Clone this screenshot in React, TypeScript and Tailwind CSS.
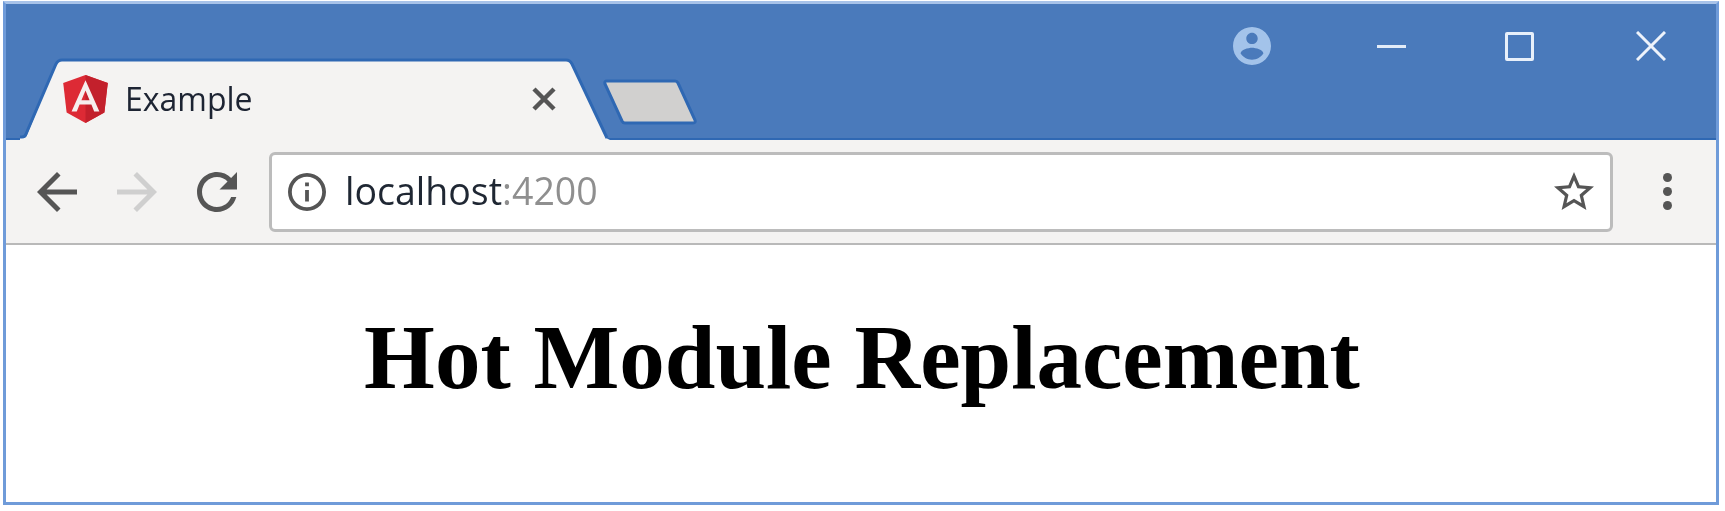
import React from 'react';

const AngularLogo = () => (
  <svg viewBox="31 30 188 200" className="h-[48px] w-[45px] shrink-0">
    <polygon fill="#dd2a35" points="125,30 31.9,63.2 46.1,186.3 125,230 203.9,186.3 218.1,63.2" />
    <polygon fill="#c3202c" points="125,30 125,230 203.9,186.3 218.1,63.2" />
    <path
      fill="#f6eeee"
      d="M125,52.1L66.8,182.6h21.7l11.7-29.2h49.4l11.7,29.2h21.7L125,52.1z M142,135.4H108l17-40.9L142,135.4z"
    />
  </svg>
);

const Tab = () => (
  <div className="relative -mb-[2px] flex h-[82px] w-[590px] shrink-0 items-center pl-[43px] pr-[54px]">
    <svg viewBox="0 0 590 82" className="absolute inset-0 h-full w-full">
      <path d="M0 80 H3 Q6 80 7 77 L36 6 Q38 2 42 2 H546 Q550 2 552 6 L586 80 L590 82 H0 Z" fill="#f4f3f2" />
      <path
        d="M0 79 H2 Q5 79 6 76 L36 6 Q38 2 42 2 H546 Q550 2 552 6 L587 80"
        fill="none"
        stroke="#2f68b3"
        strokeWidth="3"
      />
    </svg>
    <div className="relative flex w-full items-center">
      <AngularLogo />
      <span className="ml-[17px] text-[32px] leading-none text-[#1d2433]">Example</span>
      <svg viewBox="0 0 24 24" className="ml-auto h-[24px] w-[24px]">
        <path d="M2 2 L22 22 M22 2 L2 22" stroke="#555555" strokeWidth="4.5" />
      </svg>
    </div>
  </div>
);

const NewTab = () => (
  <svg viewBox="0 0 100 48" className="relative z-10 -ml-[10px] mb-[12px] h-[48px] w-[100px] shrink-0">
    <path
      d="M7 3 H75 Q77 3 78 5 L95 42 Q96 45 93 45 H25 Q23 45 22 43 L5 6 Q4 3 7 3 Z"
      fill="#d1d0cf"
      stroke="#2f68b3"
      strokeWidth="3"
    />
  </svg>
);

const WindowControls = () => (
  <div className="mt-[23px] flex h-[38px] items-center self-start pr-[50px]">
    <svg viewBox="2 2 20 20" className="h-[38px] w-[38px]">
      <path
        fill="#a3c3ea"
        d="M12 2C6.48 2 2 6.48 2 12s4.48 10 10 10 10-4.48 10-10S17.52 2 12 2zm0 3c1.66 0 3 1.34 3 3s-1.34 3-3 3-3-1.34-3-3 1.34-3 3-3zm0 14.2c-2.5 0-4.71-1.28-6-3.22.03-1.99 4-3.08 6-3.08 1.99 0 5.97 1.09 6 3.08-1.29 1.94-3.5 3.22-6 3.22z"
      />
    </svg>
    <div className="ml-[106px] h-[3px] w-[29px] bg-[#e3ecf8]" />
    <div className="ml-[99px] h-[29px] w-[29px] rounded-[2px] border-[3px] border-[#e8f0fa]" />
    <svg viewBox="0 0 30 30" className="ml-[102px] h-[30px] w-[30px]">
      <path d="M1 1 L29 29 M29 1 L1 29" stroke="#eef3fb" strokeWidth="3" />
    </svg>
  </div>
);

const Toolbar = () => (
  <div className="flex h-[105px] shrink-0 items-center border-b-2 border-[#b9b9b9] bg-[#f4f3f2] pl-[31px] pr-[44px]">
    <svg viewBox="4 4 16 16" className="h-[40px] w-[40px] shrink-0">
      <path fill="#555555" d="M20 11H7.83l5.59-5.59L12 4l-8 8 8 8 1.41-1.41L7.83 13H20v-2z" />
    </svg>
    <svg viewBox="4 4 16 16" className="ml-[40px] h-[40px] w-[40px] shrink-0">
      <path fill="#cfcfcf" d="M12 4l-1.41 1.41L16.17 11H4v2h12.17l-5.58 5.59L12 20l8-8z" />
    </svg>
    <svg viewBox="4 4 16 16" className="ml-[40px] h-[40px] w-[40px] shrink-0">
      <path
        fill="#555555"
        d="M17.65 6.35C16.2 4.9 14.21 4 12 4c-4.42 0-7.99 3.58-7.99 8s3.57 8 7.99 8c3.73 0 6.84-2.55 7.73-6h-2.08c-.82 2.33-3.04 4-5.65 4-3.31 0-6-2.69-6-6s2.69-6 6-6c1.66 0 3.14.69 4.22 1.78L13 11h7V4l-2.35 2.35z"
      />
    </svg>
    <div className="ml-[32px] flex h-[80px] flex-1 items-center rounded-[6px] border-[3px] border-[#bcbcbc] bg-white pl-[16px] pr-[16px]">
      <svg viewBox="2 2 20 20" className="h-[38px] w-[38px] shrink-0">
        <path
          fill="#555555"
          d="M11 17h2v-6h-2v6zm1-15C6.48 2 2 6.48 2 12s4.48 10 10 10 10-4.48 10-10S17.52 2 12 2zm0 18c-4.41 0-8-3.59-8-8s3.59-8 8-8 8 3.59 8 8-3.59 8-8 8zM11 9h2V7h-2v2z"
        />
      </svg>
      <span className="ml-[19px] -mt-[2px] text-[37.5px] leading-none text-[#1f2733]">
        localhost<span className="text-[#8f8f8f]">:4200</span>
      </span>
      <svg viewBox="2 2 20 20" className="ml-auto h-[40px] w-[40px] shrink-0">
        <path
          fill="#555555"
          d="M22 9.24l-7.19-.62L12 2 9.19 8.63 2 9.24l5.46 4.73L5.82 21 12 17.27 18.18 21l-1.63-7.03L22 9.24zM12 15.4l-3.76 2.27 1-4.28-3.32-2.88 4.38-.38L12 6.1l1.71 4.04 4.38.38-3.32 2.88 1 4.28L12 15.4z"
        />
      </svg>
    </div>
    <div className="ml-[50px] flex w-[9px] shrink-0 flex-col gap-[5px]">
      <div className="h-[9px] w-[9px] rounded-full bg-[#555555]" />
      <div className="h-[9px] w-[9px] rounded-full bg-[#555555]" />
      <div className="h-[9px] w-[9px] rounded-full bg-[#555555]" />
    </div>
  </div>
);

export default function App() {
  return (
    <div className="h-[511px] w-[1725px] overflow-hidden bg-white pl-[3px] pr-[6px] pt-[1px] font-['Open_Sans',sans-serif] blur-[0.6px]">
      <div className="flex h-[504px] flex-col border-[3px] border-[#6f9bd9] border-t-[#a8c3e9] bg-white">
        <div className="flex h-[136px] shrink-0 items-end justify-between border-b-2 border-[#2f68b3] bg-[#4a7abb] pl-[14px]">
          <div className="flex items-end">
            <Tab />
            <NewTab />
          </div>
          <WindowControls />
        </div>
        <Toolbar />
        <div className="flex-1 bg-white pl-[2px] pt-[61px] text-center">
          <h1 className="font-['Liberation_Serif',serif] text-[91px] font-bold leading-[104px] text-black">
            Hot Module Replacement
          </h1>
        </div>
      </div>
    </div>
  );
}
